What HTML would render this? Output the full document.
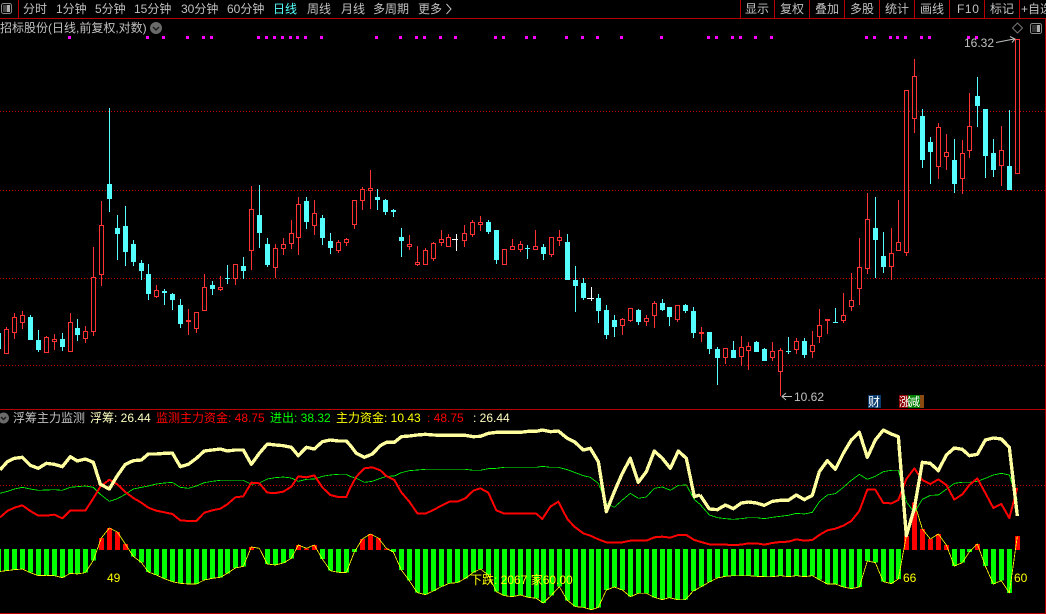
<!DOCTYPE html>
<html lang="zh">
<head>
<meta charset="utf-8">
<title>招标股份</title>
<style>
html,body{margin:0;padding:0;background:#000;width:1046px;height:614px;overflow:hidden}
#w{position:relative;width:1046px;height:614px;overflow:hidden;background:#000;font:12px/14px "Liberation Sans","WenQuanYi Zen Hei","Noto Sans CJK SC",sans-serif;color:#c0c0c0}
#w span{position:absolute;white-space:pre}
svg{position:absolute;left:0;top:0}
.t span{top:2px}
</style>
</head>
<body>
<div id="w">
<svg width="1046" height="614" viewBox="0 0 1046 614">
<g shape-rendering="crispEdges">
<!-- frame -->
<path d="M0 18.5H1046M0 409.5H1046M0 613.5H1046M1045.5 18V614M18.5 0V18M740.5 0V18M774.5 0V18M809.5 0V18M844.5 0V18M879.5 0V18M914.5 0V18M949.5 0V18M984.5 0V18M1019.5 0V18" stroke="#b80000" fill="none"/>
<!-- grid -->
<path d="M0 111.5H1045M0 190.5H1045M0 278.5H1045M0 365.5H1045M0 485.5H1045" stroke="#c80000" stroke-dasharray="1 2" fill="none"/>
<!-- magenta markers -->
<path fill="#f0f" d="M68 36h3v3h-3zM146 36h3v3h-3zM162 36h3v3h-3zM186 36h3v3h-3zM202 36h3v3h-3zM210 36h3v3h-3zM257 36h3v3h-3zM265 36h3v3h-3zM273 36h3v3h-3zM281 36h3v3h-3zM289 36h3v3h-3zM296 36h3v3h-3zM304 36h3v3h-3zM320 36h3v3h-3zM375 36h3v3h-3zM399 36h3v3h-3zM415 36h3v3h-3zM423 36h3v3h-3zM439 36h3v3h-3zM454 36h3v3h-3zM494 36h3v3h-3zM502 36h3v3h-3zM525 36h3v3h-3zM533 36h3v3h-3zM565 36h3v3h-3zM581 36h3v3h-3zM596 36h3v3h-3zM620 36h3v3h-3zM660 36h3v3h-3zM707 36h3v3h-3zM715 36h3v3h-3zM731 36h3v3h-3zM739 36h3v3h-3zM754 36h3v3h-3zM770 36h3v3h-3zM865 36h3v3h-3zM873 36h3v3h-3zM889 36h3v3h-3zM896 36h3v3h-3zM904 36h3v3h-3zM920 36h3v3h-3zM928 36h3v3h-3zM967 36h3v3h-3zM975 36h3v3h-3z"/>
<!-- cyan wicks -->
<path fill="none" stroke="#55ffff" stroke-width="1" d="M30.5 315V340M38.5 330V352M62.5 333V351M77.5 319V341M109.5 108V212M117.5 215V260M125.5 206V266M133.5 240V266M141.5 260V280M148.5 264V300M164.5 289V305M172.5 293V310M180.5 299V328M212.5 281V295M227.5 265V284M243.5 257V279M259.5 185V248M267.5 238V267M306.5 197V229M322.5 215V245M330.5 233V254M377.5 189V210M385.5 199V215M393.5 209V217M401.5 228V257M488.5 220V234M496.5 230V264M527.5 245V259M543.5 244V260M567.5 234V280M575.5 266V312M583.5 278V300M598.5 294V323M606.5 305V339M614.5 315V337M638.5 309V325M662.5 299V311M669.5 307V326M685.5 304V313M693.5 307V338M709.5 332V354M717.5 347V385M733.5 341V358M756.5 341V352M764.5 348V361M788.5 337V354M804.5 338V358M835.5 308V323M875.5 197V278M883.5 232V273M922.5 109V168M930.5 137V184M954.5 139V193M977.5 77V127M985.5 109V178M993.5 139V177M1009.5 110V190"/>
<!-- cyan bodies -->
<path fill="#55ffff" d="M0 333h1v16h-1z"/>
<path fill="none" stroke="#55ffff" stroke-width="5" d="M30.5 317V340M38.5 340V350M62.5 339V347M77.5 328V335M109.5 184V199M117.5 228V234M125.5 226V252M133.5 244V262M141.5 263V271M148.5 274V294M164.5 291V293M172.5 294V300M180.5 305V324M212.5 285V289M227.5 278V279M243.5 266V271M259.5 215V233M267.5 244V265M306.5 201V222M322.5 218V238M330.5 241V248M377.5 197V200M385.5 200V212M393.5 210V212M401.5 237V241M488.5 222V232M496.5 230V260M527.5 248V249M543.5 247V254M567.5 242V280M575.5 280V286M583.5 283V298M598.5 298V311M606.5 310V335M614.5 320V327M638.5 310V322M662.5 303V310M669.5 307V317M685.5 305V311M693.5 311V333M709.5 332V349M717.5 349V358M733.5 350V358M756.5 342V352M764.5 349V361M788.5 351V352M804.5 341V355M835.5 322V323M875.5 228V240M883.5 256V267M922.5 116V160M930.5 142V152M954.5 160V184M977.5 96V106M985.5 109V156M993.5 153V170M1009.5 166V190"/>
<!-- red wicks -->
<path fill="none" stroke="#ff3333" stroke-width="1" d="M6.5 327V354M14.5 313V339M22.5 311V329M46.5 336V353M54.5 334V350M70.5 313V352M85.5 326V343M93.5 247V336M101.5 201V286M156.5 285V298M188.5 309V335M196.5 312V333M204.5 274V311M220.5 276V291M235.5 264V285M251.5 186V270M275.5 244V278M283.5 238V255M291.5 220V249M298.5 197V255M314.5 200V235M338.5 240V253M346.5 238V246M354.5 200V229M362.5 187V210M370.5 170V209M409.5 235V250M417.5 246V266M425.5 248V265M433.5 242V261M441.5 230V246M448.5 234V247M464.5 225V247M472.5 220V237M480.5 216V231M504.5 249V265M512.5 239V250M520.5 241V252M535.5 230V250M551.5 237V257M559.5 230V246M622.5 318V335M630.5 308V322M646.5 315V326M654.5 301V328M677.5 305V322M701.5 327V342M725.5 348V364M741.5 336V366M748.5 342V370M772.5 342V361M780.5 348V396M796.5 338V354M812.5 331V358M819.5 309V343M827.5 319V334M843.5 293V323M851.5 273V311M859.5 238V305M867.5 193V274M891.5 228V280M898.5 200V251M906.5 90V256M914.5 59V133M938.5 123V179M946.5 134V170M962.5 140V194M969.5 93V158M1001.5 126V186M1017.5 39V174"/>
<!-- red hollow bodies -->
<path fill="#000" stroke="#ff3333" stroke-width="1" d="M4.5 329.5h4V353.5h-4zM12.5 317.5h4V332.5h-4zM20.5 315.5h4V322.5h-4zM44.5 337.5h4V352.5h-4zM52.5 339.5h4V341.5h-4zM68.5 322.5h4V351.5h-4zM83.5 331.5h4V338.5h-4zM91.5 277.5h4V331.5h-4zM99.5 225.5h4V274.5h-4zM154.5 290.5h4V296.5h-4zM186.5 320.5h4V321.5h-4zM194.5 312.5h4V328.5h-4zM202.5 287.5h4V310.5h-4zM218.5 287.5h4V289.5h-4zM233.5 264.5h4V278.5h-4zM249.5 209.5h4V250.5h-4zM273.5 248.5h4V267.5h-4zM281.5 244.5h4V248.5h-4zM289.5 233.5h4V243.5h-4zM296.5 204.5h4V237.5h-4zM312.5 213.5h4V225.5h-4zM336.5 242.5h4V250.5h-4zM344.5 239.5h4V242.5h-4zM352.5 200.5h4V224.5h-4zM360.5 189.5h4V200.5h-4zM368.5 188.5h4V190.5h-4zM407.5 244.5h4V246.5h-4zM415.5 262.5h4V264.5h-4zM423.5 250.5h4V264.5h-4zM431.5 243.5h4V258.5h-4zM439.5 239.5h4V242.5h-4zM446.5 237.5h4V246.5h-4zM462.5 233.5h4V240.5h-4zM470.5 222.5h4V234.5h-4zM478.5 222.5h4V224.5h-4zM502.5 249.5h4V264.5h-4zM510.5 246.5h4V249.5h-4zM518.5 244.5h4V249.5h-4zM533.5 246.5h4V249.5h-4zM549.5 237.5h4V254.5h-4zM557.5 237.5h4V240.5h-4zM620.5 319.5h4V325.5h-4zM628.5 308.5h4V320.5h-4zM644.5 318.5h4V321.5h-4zM652.5 303.5h4V315.5h-4zM675.5 305.5h4V319.5h-4zM699.5 332.5h4V333.5h-4zM723.5 348.5h4V357.5h-4zM739.5 347.5h4V356.5h-4zM746.5 346.5h4V350.5h-4zM770.5 351.5h4V357.5h-4zM778.5 350.5h4V371.5h-4zM794.5 341.5h4V349.5h-4zM810.5 345.5h4V351.5h-4zM817.5 325.5h4V336.5h-4zM825.5 319.5h4V320.5h-4zM841.5 315.5h4V320.5h-4zM849.5 300.5h4V306.5h-4zM857.5 267.5h4V288.5h-4zM865.5 219.5h4V268.5h-4zM889.5 253.5h4V266.5h-4zM896.5 242.5h4V250.5h-4zM904.5 90.5h4V252.5h-4zM912.5 76.5h4V118.5h-4zM936.5 127.5h4V166.5h-4zM944.5 152.5h4V156.5h-4zM960.5 153.5h4V178.5h-4zM967.5 126.5h4V150.5h-4zM999.5 150.5h4V165.5h-4zM1015.5 39.5h4V173.5h-4z"/>
<!-- white dojis -->
<path fill="none" stroke="#fff" d="M456.5 234V251M452 239.5h6M591.5 287V301M587 298.5h7"/>
<!-- lower panel: left -->
<g transform="translate(0 405) scale(.33333)" fill="none" stroke-linejoin="round">
<path stroke="#00ff00" stroke-width="15" d="M-5 432V500M19 432V497M43 432V494M67 432V492M91 432V503M115 432V512M139 432V511M163 432V512M187 432V518M211 432V505M232 432V507M256 432V503M280 432V466M400 432V454M424 432V472M445 432V501M469 432V510M493 432V521M517 432V530M541 432V535M565 432V537M589 432V537M613 432V525M637 432V520M661 432V517M682 432V505M706 432V489M730 432V484M802 432V477M826 432V480M850 432V474M874 432V460M967 432V462M991 432V497M1015 432V502M1039 432V503"/>
<path stroke="#ff0000" stroke-width="15" d="M304 435V399M328 435V369M352 435V381M376 435V417M754 435V426M895 435V420M919 435V430M943 435V420"/>
<polyline stroke="#ffff00" stroke-width="2.4" points="-5,500 19,497 43,494 67,492 91,503 115,512 139,511 163,512 187,518 211,505 232,507 256,503 280,466 304,399 328,369 352,381 376,417 400,454 424,472 445,501 469,510 493,521 517,530 541,535 565,537 589,537 613,525 637,520 661,517 682,505 706,489 730,484 754,426 778,430 802,477 826,480 850,474 874,460 895,420 919,430 943,420 967,462 991,497 1015,502 1039,503 1063,441"/>
<polyline stroke="#00ff00" stroke-width="2.4" points="0,265 22,259 43,252 67,247 91,252 115,256 139,255 163,254 187,256 211,247 232,245 256,243 280,247 301,268 328,289 352,281 376,268 400,252 424,247 445,243 469,237 493,234 517,232 541,247 565,250 589,243 613,233 637,229 661,226 682,226 706,226 730,226 754,238 778,234 802,222 826,218 850,216 874,219 895,229 919,223 943,222 967,214 991,210 1015,208 1039,208 1050,214"/>
<polyline stroke="#ff0000" stroke-width="6" points="0,337 22,318 43,308 67,301 91,318 115,332 139,332 163,329 187,340 211,316 232,317 256,317 280,280 301,245 328,224 352,238 376,261 400,279 424,293 445,308 469,317 493,322 517,327 541,346 565,348 589,348 613,323 637,316 661,311 682,298 706,277 730,274 754,233 778,235 802,263 826,264 850,260 874,245 895,214 919,217 943,211 967,247 991,270 1015,276 1039,276 1050,250"/>
<polyline stroke="#ffffa0" stroke-width="10" points="0,195 22,170 43,160 67,157 91,181 115,190 139,175 163,178 187,185 211,155 232,168 256,162 280,172 301,238 328,252 352,212 376,178 400,167 424,165 445,147 469,147 493,145 517,144 541,185 565,178 589,160 613,138 637,135 661,132 682,138 706,135 730,135 754,178 778,145 802,117 826,120 850,122 874,127 895,152 919,127 943,132 967,110 991,105 1015,108 1039,108 1050,120"/>
</g>
<!-- lower panel: middle -->
<g transform="translate(350 405) scale(.33333)" fill="none" stroke-linejoin="round">
<path stroke="#00ff00" stroke-width="15" d="M13 432V441M130 432V441M154 432V495M178 432V527M202 432V563M226 432V569M250 432V558M274 432V545M298 432V535M322 432V533M346 432V520M370 432V502M391 432V492M415 432V510M439 432V560M463 432V572M487 432V575M511 432V570M535 432V577M559 432V580M580 432V594M604 432V571M628 432V545M652 432V586M676 432V605M700 432V607M724 432V614M745 432V607M769 432V555M793 432V546M817 432V555M841 432V575M865 432V565M889 432V565M913 432V577M937 432V584M958 432V578M982 432V584M1006 432V584M1030 432V558M1054 432V545"/>
<path stroke="#ff0000" stroke-width="15" d="M37 435V402M61 435V387M85 435V399M109 435V430"/>
<polyline stroke="#ffff00" stroke-width="2.4" points="-11,503 13,441 37,402 61,387 85,399 109,430 130,441 154,495 178,527 202,563 226,569 250,558 274,545 298,535 322,533 346,520 370,502 391,492 415,510 439,560 463,572 487,575 511,570 535,577 559,580 580,594 604,571 628,545 652,586 676,605 700,607 724,614 745,607 769,555 793,546 817,555 841,575 865,565 889,565 913,577 937,584 958,578 982,584 1006,584 1030,558 1054,545"/>
<polyline stroke="#00ff00" stroke-width="2.4" points="0,214 19,220 43,232 67,229 91,220 109,214 133,213 154,203 178,197 202,195 226,193 250,193 274,193 298,193 322,193 346,193 370,196 391,196 415,191 439,190 463,187 487,187 511,187 535,187 559,187 577,184 601,187 625,187 652,194 673,202 700,212 721,217 745,235 769,295 793,307 817,285 841,265 865,280 889,276 913,250 937,246 961,256 985,241 1009,240 1033,284 1050,298"/>
<polyline stroke="#ff0000" stroke-width="6" points="0,250 19,215 43,190 67,187 91,196 109,213 133,225 154,262 178,290 202,325 226,326 250,315 274,302 298,290 322,290 346,280 370,257 391,250 415,263 439,316 463,326 487,326 511,326 535,326 559,326 577,342 601,305 625,290 652,342 673,365 700,385 721,392 745,403 769,412 793,413 817,412 841,407 865,407 889,407 913,397 937,395 961,398 985,390 1009,390 1033,405 1050,410"/>
<polyline stroke="#ffffa0" stroke-width="10" points="0,120 19,145 43,157 67,147 91,122 109,112 133,112 154,95 178,93 202,90 226,88 250,90 274,91 298,91 322,91 346,91 370,95 391,94 415,85 439,82 463,82 487,82 511,82 535,79 559,79 577,75 601,80 625,78 652,100 673,110 700,135 721,130 745,170 769,320 793,260 817,205 841,160 865,232 889,200 913,138 937,160 961,190 985,138 1009,160 1033,275 1050,270"/>
</g>
<!-- lower panel: right -->
<g transform="translate(700 405) scale(.33333)" fill="none" stroke-linejoin="round">
<path stroke="#00ff00" stroke-width="15" d="M4 432V545M28 432V531M52 432V519M76 432V514M100 432V512M124 432V512M145 432V512M169 432V514M193 432V515M217 432V515M241 432V512M265 432V515M289 432V512M313 432V515M337 432V512M358 432V524M382 432V537M406 432V537M430 432V546M454 432V551M478 432V546M502 432V468M526 432V473M550 432V530M574 432V536M595 432V522M763 432V483M787 432V473M808 432V441M856 432V483M880 432V537M904 432V527M928 432V564"/>
<path stroke="#ff0000" stroke-width="15" d="M619 435V393M643 435V293M667 435V372M691 435V402M715 435V387M739 435V420M832 435V417M952 435V393"/>
<polyline stroke="#ffff00" stroke-width="2.4" points="4,545 28,531 52,519 76,514 100,512 124,512 145,512 169,514 193,515 217,515 241,512 265,515 289,512 313,515 337,512 358,524 382,537 406,537 430,546 454,551 478,546 502,468 526,473 550,530 574,536 595,522 619,393 643,293 667,372 691,402 715,387 739,420 763,483 787,473 808,441 832,417 856,483 880,537 904,527 928,564 952,393"/>
<polyline stroke="#00ff00" stroke-width="2.4" points="0,298 28,330 52,338 76,341 100,343 124,341 145,338 169,338 193,341 217,337 241,334 265,331 289,325 313,327 337,322 358,290 382,270 406,266 430,247 454,226 478,208 502,223 526,214 550,200 574,196 595,196 619,290 643,323 667,283 691,271 715,270 739,253 763,235 787,232 808,232 832,229 856,220 880,210 904,205 928,210 952,285"/>
<polyline stroke="#ff0000" stroke-width="6" points="0,410 28,418 52,419 76,419 100,420 124,419 145,415 169,415 193,419 217,414 241,411 265,410 289,403 313,407 337,405 358,390 382,376 406,371 430,362 454,348 478,318 502,254 526,254 550,294 574,295 595,285 619,222 643,190 667,225 691,237 715,223 739,240 763,284 787,268 808,240 832,220 856,264 880,309 904,297 928,339 952,248"/>
<polyline stroke="#ffffa0" stroke-width="10" points="0,270 28,312 52,314 76,300 100,311 124,294 145,291 169,294 193,301 217,289 241,286 265,286 289,270 313,284 337,271 358,200 382,167 406,193 430,145 454,105 478,82 502,157 526,105 550,75 574,87 595,95 619,392 643,310 667,172 691,175 715,197 739,150 763,129 787,133 808,152 832,148 856,105 880,99 904,102 928,127 952,333"/>
</g>
<!-- tag boxes -->
<rect x="868" y="395" width="13" height="13" fill="#0a3c6e"/>
<rect x="899" y="395" width="9" height="13" fill="#8b0000"/>
<rect x="908" y="395" width="12" height="13" fill="#008000"/>
<rect x="920" y="395" width="4" height="13" fill="#8a4a10"/>
</g>
<!-- icons -->
<g fill="none">
<rect x="1.5" y="3.5" width="10" height="10" rx="2" stroke="#8a8a8a"/><rect x="7" y="5" width="3" height="7" fill="#b0b0b0"/><rect x="3" y="5" width="4" height="7" fill="#444"/>
<rect x="1030.5" y="23.5" width="11" height="10" rx="2" stroke="#8a8a8a"/><rect x="1037" y="25" width="3" height="7" fill="#b0b0b0"/><rect x="1032" y="25" width="5" height="7" fill="#333"/>
<path d="M1017.5 23l5 5-5 5-5-5z" stroke="#777"/>
<circle cx="156" cy="28" r="6" fill="#6a6a6a"/><path d="M153 27l3 3 3-3" stroke="#1c1c1c" stroke-width="1.5"/>
<circle cx="3.5" cy="418" r="5.5" fill="#6a6a6a"/><path d="M1 417l2.5 2.5 2.5-2.5" stroke="#1c1c1c" stroke-width="1.5"/>
<path d="M446.5 4l4.5 5-4.5 5" stroke="#c0c0c0"/>
<path d="M996 42.5l18-3.5M1010 36.5l5 2.5-3 3.5" stroke="#c0c0c0"/>
<path d="M782 396.5h10M786 393l-4 3.5 4 3.5" stroke="#c0c0c0"/>
</g>
</svg>
<div class="t">
<span style="left:23px">分时</span>
<span style="left:56px">1分钟</span>
<span style="left:95px">5分钟</span>
<span style="left:134px">15分钟</span>
<span style="left:181px">30分钟</span>
<span style="left:227px">60分钟</span>
<span style="left:273px;color:#55ffff">日线</span>
<span style="left:307px">周线</span>
<span style="left:341px">月线</span>
<span style="left:373px">多周期</span>
<span style="left:418px">更多</span>
<span style="left:745px">显示</span>
<span style="left:780px">复权</span>
<span style="left:815px">叠加</span>
<span style="left:850px">多股</span>
<span style="left:885px">统计</span>
<span style="left:920px">画线</span>
<span style="left:957px;letter-spacing:.6px">F10</span>
<span style="left:990px">标记</span>
<span style="left:1021px">+自选</span>
</div>
<span style="left:0;top:21px">招标股份(日线,前复权,对数)</span>
<span style="left:964px;top:36px">16.32</span>
<span style="left:794px;top:390px">10.62</span>
<span style="left:868px;top:395px;color:#fff">财</span>
<span style="left:899px;top:395px;color:#fff">涨</span>
<span style="left:908px;top:395px;color:#fff;width:16px">减</span>
<span style="left:13px;top:411px">浮筹主力监测</span>
<span style="left:90px;top:411px;color:#ffffc0">浮筹: 26.44</span>
<span style="left:156px;top:411px;color:#ff0000">监测主力资金: 48.75</span>
<span style="left:270px;top:411px;color:#00ff00">进出: 38.32</span>
<span style="left:336px;top:411px;color:#ffff00">主力资金: 10.43</span>
<span style="left:427px;top:411px;color:#ff0000">: 48.75</span>
<span style="left:473px;top:411px;color:#ffffc0">: 26.44</span>
<span style="left:107px;top:571px;color:#ffff00">49</span>
<span style="left:903px;top:571px;color:#ffff00">66</span>
<span style="left:1014px;top:571px;color:#ffff00">60</span>
<span style="left:470px;top:573px;color:#ffff00">下跌: 2067 家60.00</span>
</div>
</body>
</html>
